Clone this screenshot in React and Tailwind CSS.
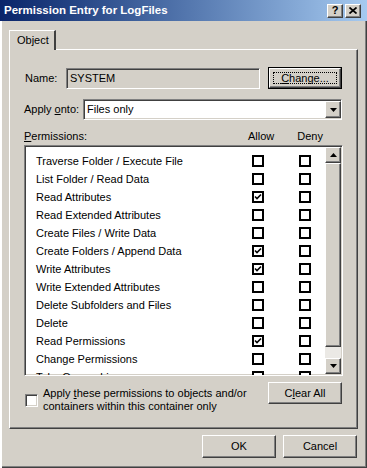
import React from 'react';

const rows = [
    { label: 'Traverse Folder / Execute File', allow: false },
    { label: 'List Folder / Read Data', allow: false },
    { label: 'Read Attributes', allow: true },
    { label: 'Read Extended Attributes', allow: false },
    { label: 'Create Files / Write Data', allow: false },
    { label: 'Create Folders / Append Data', allow: true },
    { label: 'Write Attributes', allow: true },
    { label: 'Write Extended Attributes', allow: false },
    { label: 'Delete Subfolders and Files', allow: false },
    { label: 'Delete', allow: false },
    { label: 'Read Permissions', allow: true },
    { label: 'Change Permissions', allow: false },
    { label: 'Take Ownership', allow: false },
];

// classic 3D edges
const raised = 'border border-t-white border-l-white border-r-[#404040] border-b-[#404040] shadow-[inset_-1px_-1px_0_#808080]';
const sunken = 'border border-t-[#808080] border-l-[#808080] border-r-white border-b-white shadow-[inset_1px_1px_0_#404040,inset_-1px_-1px_0_#d4d0c8]';

const Check = ({ checked }) => (
    <span className="w-[12px] h-[12px] border-2 border-black bg-white flex items-center justify-center shrink-0">
        {checked && (
            <svg width="8" height="8" viewBox="0 0 8 8">
                <path d="M1 3.5 L3 5.5 L7 1.5" stroke="#000" strokeWidth="1.6" fill="none" />
            </svg>
        )}
    </span>
);

const Arrow = ({ up }) => (
    <svg width="7" height="4" viewBox="0 0 7 4">
        <path d={up ? 'M3.5 0 L7 4 L0 4 Z' : 'M0 0 L7 0 L3.5 4 Z'} fill="#000" />
    </svg>
);

const Button = ({ children, className = '' }) => (
    <div className={`w-[74px] flex items-center justify-center bg-[#d4d0c8] ${raised} ${className}`}>
        {children}
    </div>
);

export default function App() {
    return (
        <div
            className="w-[367px] h-[468px] bg-[#d4d0c8] flex flex-col text-[11px] text-black shadow-[inset_2px_0_0_#ffffff,inset_-1px_-1px_0_#404040,inset_-2px_-2px_0_#808080] overflow-hidden"
            style={{ fontFamily: '"Liberation Sans", Arial, sans-serif' }}
        >
            {/* Title bar */}
            <div className="h-[21px] shrink-0 flex items-center pl-[4px] pr-[6px] bg-gradient-to-r from-[#0a246a] to-[#a6caf0]">
                <span className="text-white font-bold text-[11.5px] flex-1">Permission Entry for LogFiles</span>
                <div className={`w-[16px] h-[14px] flex items-center justify-center bg-[#d4d0c8] ${raised} font-bold text-[11px] leading-none`}>?</div>
                <div className={`w-[16px] h-[14px] ml-[2px] flex items-center justify-center bg-[#d4d0c8] ${raised}`}>
                    <svg width="8" height="7" viewBox="0 0 8 7">
                        <path d="M0.5 0.5 L7.5 6.5 M7.5 0.5 L0.5 6.5" stroke="#000" strokeWidth="1.7" />
                    </svg>
                </div>
            </div>

            {/* Tab */}
            <div className="ml-[9px] mt-[9px] w-[47px] h-[20px] -mb-[1px] relative z-10 bg-[#d4d0c8] border-l border-t border-white border-r-2 border-r-[#404040] flex items-center pl-[7px]">
                Object
            </div>

            {/* Tab panel */}
            <div className={`ml-[9px] w-[349px] h-[380px] flex flex-col px-[14px] pt-[17px] ${raised}`}>
                {/* Name */}
                <div className="flex items-center h-[22px]">
                    <span className="w-[42px] pl-[1px]">Name:</span>
                    <div className={`w-[194px] h-[21px] flex items-center pl-[3px] ${sunken}`}>SYSTEM</div>
                    <div className="ml-auto mr-[1px] w-[74px] h-[22px] border border-black">
                        <div className={`w-full h-full flex items-center justify-center p-[3px] ${raised}`}>
                            <span className="w-full h-full flex items-center justify-center border border-dotted border-black">
                                <span><u>C</u>hange...</span>
                            </span>
                        </div>
                    </div>
                </div>

                {/* Apply onto */}
                <div className="flex items-center h-[21px] mt-[10px]">
                    <span className="w-[59px]">Apply <u>o</u>nto:</span>
                    <div className={`w-[259px] h-[21px] flex items-center bg-white pl-[3px] ${sunken}`}>
                        <span className="flex-1">Files only</span>
                        <div className={`w-[16px] h-[17px] flex items-center justify-center bg-[#d4d0c8] ${raised}`}>
                            <Arrow />
                        </div>
                    </div>
                </div>

                {/* Permissions header */}
                <div className="flex items-center h-[14px] mt-[9px]">
                    <span className="w-[224px]"><u>P</u>ermissions:</span>
                    <span>Allow</span>
                    <span className="ml-[23px]">Deny</span>
                </div>

                {/* List */}
                <div className={`mt-[2px] h-[231px] bg-white flex ${sunken} border-[#808080]`}>
                    <div className="flex-1 overflow-hidden pt-[6px]">
                        {rows.map((r) => (
                            <div key={r.label} className="h-[18px] flex items-center pl-[11px]">
                                <span className="w-[216px] whitespace-nowrap">{r.label}</span>
                                <Check checked={r.allow} />
                                <span className="ml-[35px]"><Check checked={false} /></span>
                            </div>
                        ))}
                    </div>
                    <div className="w-[16px] flex flex-col mr-[1px] my-[1px]">
                        <div className={`h-[16px] flex items-center justify-center bg-[#d4d0c8] ${raised}`}>
                            <Arrow up />
                        </div>
                        <div className={`h-[184px] bg-[#d4d0c8] ${raised}`} />
                        <div className="flex-1 bg-[#ebe9e5]" />
                        <div className={`h-[16px] flex items-center justify-center bg-[#d4d0c8] ${raised}`}>
                            <Arrow />
                        </div>
                    </div>
                </div>

                {/* Bottom row */}
                <div className="flex items-start mt-[6px]">
                    <div className="flex items-center mt-[5px] flex-1">
                        <span className={`w-[13px] h-[13px] ml-[1px] bg-white shrink-0 ${sunken}`} />
                        <span className="ml-[5px] leading-[13px]">
                            Apply <u>t</u>hese permissions to objects and/or<br />
                            containers within this container only
                        </span>
                    </div>
                    <Button className="h-[22px] mr-[1px]">C<u>l</u>ear All</Button>
                </div>
            </div>

            {/* Dialog buttons */}
            <div className="flex justify-end mt-[6px] pr-[10px]">
                <Button className="h-[23px]">OK</Button>
                <Button className="h-[23px] ml-[7px]">Cancel</Button>
            </div>
        </div>
    );
}
